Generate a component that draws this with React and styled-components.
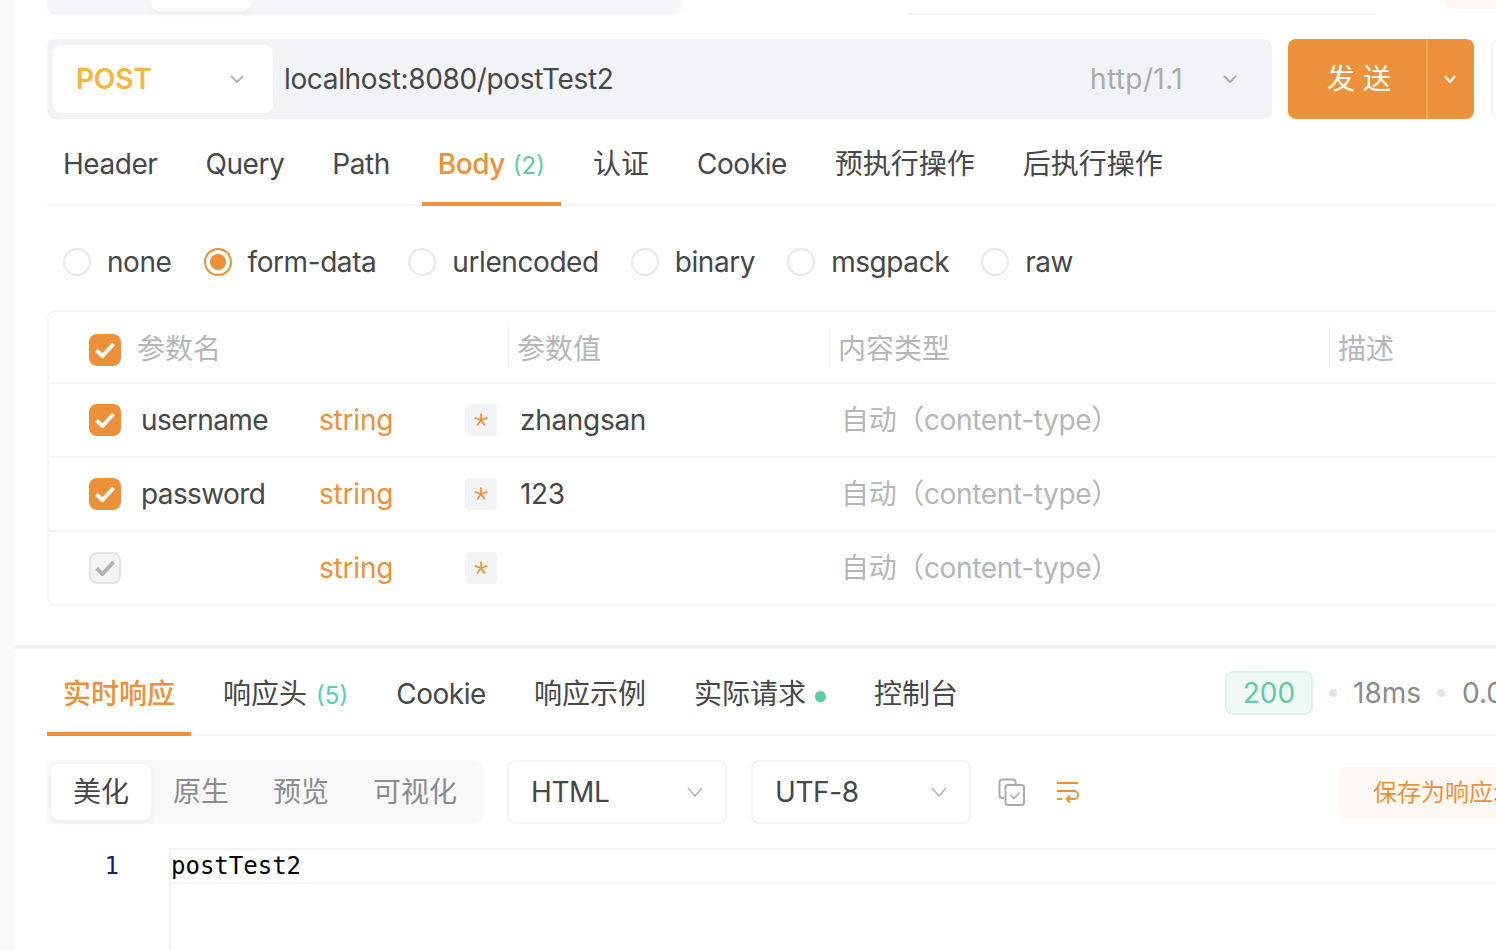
import React from "react";
import styled, { createGlobalStyle } from "styled-components";

const Global = createGlobalStyle`
  html, body { margin: 0; padding: 0; background: #fff; }
  body { width: 1496px; height: 950px; overflow: hidden; font-family: Inter, "Noto Sans CJK SC", sans-serif; color: #464749; font-size: 28px; line-height: 40px; }
  * { box-sizing: border-box; }
`;
const ORANGE = "#ec9139";
const GREEN = "#5fcba4";

const Page = styled.div`
  width: 1496px; height: 950px; display: flex; overflow: hidden; background: #fff;
`;
const Rail = styled.div`width: 15px; flex: none; background: #f7f8fa;`;
const Main = styled.main`width: 1900px; flex: none;`;

const TopStrip = styled.div`height: 39px; padding-left: 32px; display: flex; align-items: flex-start;`;
const TopSegment = styled.div`width: 635px; height: 15px; background: #f5f6f9; border-radius: 0 0 8px 8px; padding-left: 104px;`;
const TopActive = styled.div`width: 100px; height: 11px; background: #fff; border-radius: 0 0 8px 8px; box-shadow: 0 2px 6px rgba(0,0,0,.06);`;
const TopLine = styled.div`width: 467px; height: 2px; background: #f3f3f4; margin: 13px 0 0 227px;`;
const TopPeach = styled.div`width: 80px; height: 9px; background: #fdf8f4; border-radius: 0 0 8px 8px; margin-left: 69px;`;

const Pad = styled.div`padding-left: 32px;`;
const UrlRow = styled.div`display: flex; height: 80px;`;
const UrlBar = styled.div`width: 1225px; background: #f1f3f7; border-radius: 8px; padding: 6px; display: flex; align-items: center;`;
const Method = styled.div`
  width: 220px; height: 68px; background: #fff; border-radius: 8px; display: flex; align-items: center;
  justify-content: space-between; padding: 0 29px 0 23px; color: #f8b63f; font-weight: 600; flex: none;
  letter-spacing: -0.2px;
`;
const UrlText = styled.div`margin-left: 11px; flex: 1; letter-spacing: -0.35px;`;
const Proto = styled.div`color: #a9abaf; margin-right: 40px; letter-spacing: 0.4px;`;
const ProtoArrow = styled.div`display: flex; margin-right: 29px;`;
const Send = styled.div`width: 186px; margin-left: 16px; background: ${ORANGE}; border-radius: 8px; display: flex; color: #fff; flex: none;`;
const SendLabel = styled.div`width: 140px; display: flex; align-items: center; justify-content: center; letter-spacing: 8px; border-right: 2px solid #f3ad5a; padding-left: 12px;`;
const SendArrow = styled.div`flex: 1; display: flex; align-items: center; justify-content: center; padding-right: 2px;`;
const NextBox = styled.div`width: 60px; margin-left: 17px; border: 2px solid #f3f3f4; border-radius: 8px; flex: none;`;

const TabBar = styled.div`
  display: flex; gap: 16px; height: ${p => p.$h}px; border-bottom: 2px solid #f3f3f4; align-items: stretch;
`;
const Tab = styled.div`
  padding: 6px 16px 0; display: flex; align-items: center; margin-bottom: -2px; white-space: nowrap;
  color: ${p => (p.$active ? ORANGE : "#464749")};
  border-bottom: 4px solid ${p => (p.$active ? ORANGE : "transparent")};
  font-weight: ${p => (p.$active ? 500 : 400)};
  letter-spacing: ${p => (p.$latin ? "-0.45px" : "0")};
`;
const Count = styled.span`color: ${GREEN}; font-size: 24px; margin: 4px 0 0 ${p => p.$ml}px; font-weight: 400; letter-spacing: 0;`;
const Dot = styled.span`width: 11px; height: 11px; border-radius: 50%; background: ${GREEN}; margin: 6px 0 0 9px;`;

const RadioRow = styled.div`display: flex; gap: 32px; height: 104px; align-items: center; padding: 8px 0 0 16px; letter-spacing: -0.42px;`;
const RadioItem = styled.div`display: flex; align-items: center; gap: 16px;`;
const RadioMark = styled.span`
  width: 28px; height: 28px; border-radius: 50%; border: 2px solid ${p => (p.$on ? ORANGE : "#e8e8e9")};
  display: flex; align-items: center; justify-content: center;
  &::after { content: ""; width: 16px; height: 16px; border-radius: 50%; background: ${p => (p.$on ? ORANGE : "transparent")}; }
`;

const Table = styled.div`border: 2px solid #f3f3f4; border-radius: 8px 0 0 8px; width: 1800px;`;
const Row = styled.div`
  display: grid; grid-template-columns: 459px 321px 500px 1fr; height: ${p => p.$h}px; align-items: center;
  border-bottom: 2px solid #f3f3f4;
  &:last-child { border-bottom: 0; height: 72px; }
`;
const HeadCell = styled.div`
  color: #b5b6b8; height: 40px; display: flex; align-items: center; padding: 4px 0 0 8px;
  border-left: 1px solid #f0f0f1;
`;
const HeadFirst = styled.div`
  color: #b5b6b8; height: 40px; display: flex; align-items: center; padding: 4px 0 0 40px; gap: 16px;
`;
const NameCell = styled.div`display: flex; align-items: center; padding-left: 40px;`;
const Box = styled.span`
  width: 32px; height: 32px; border-radius: 8px; flex: none; display: flex; align-items: center; justify-content: center;
  background: ${p => (p.$off ? "#f3f3f4" : ORANGE)};
  border: ${p => (p.$off ? "2px solid #e4e4e5" : "0")};
`;
const HeadBox = styled(Box)`margin-top: 2px;`;
const ParamName = styled.span`width: 178px; margin-left: 20px; flex: none; letter-spacing: -0.6px;`;
const ParamType = styled.span`width: 146px; color: ${ORANGE}; flex: none; letter-spacing: -0.2px;`;
const Required = styled.span`
  width: 32px; height: 32px; background: #f2f3f5; border-radius: 4px; color: ${ORANGE}; flex: none;
  display: flex; align-items: center; justify-content: center;
`;
const ValueCell = styled.div`padding-left: 12px; letter-spacing: -0.3px;`;
const TypeCell = styled.div`color: #b5b6b8; padding-left: 12px; white-space: nowrap; letter-spacing: -0.35px;`;

const Divider = styled.div`height: 4px; background: #f1f1ed; margin-top: 39px;`;
const RespBar = styled.div`display: flex; height: 87px; position: relative;`;
const RespTabs = styled(TabBar)`width: 100%;`;
const Stats = styled.div`position: absolute; left: 1178px; top: 22px; display: flex; align-items: center; height: 44px; color: #8a8b8d; white-space: nowrap;`;
const Status = styled.span`
  width: 88px; height: 44px; border-radius: 8px; background: #eef9f5; border: 2px solid #d9f3ea; color: ${GREEN};
  display: flex; align-items: center; justify-content: center; margin-right: 16px;
`;
const Sep = styled.span`width: 8px; height: 8px; border-radius: 50%; background: #e4e4e6; margin: 0 ${p => p.$r}px 0 ${p => p.$l}px;`;

const Tools = styled.div`display: flex; height: 64px; margin-top: 24px; align-items: center;`;
const Segment = styled.div`display: flex; background: #f7f8fa; border-radius: 8px; padding: 4px; height: 64px; width: 436px; flex: none;`;
const SegItem = styled.div`
  padding: 0 22px; display: flex; align-items: center; border-radius: 8px;
  color: ${p => (p.$active ? "#464749" : "#8b8c8e")};
  background: ${p => (p.$active ? "#fff" : "transparent")};
  box-shadow: ${p => (p.$active ? "0 2px 6px rgba(0,0,0,.06)" : "none")};
`;
const Select = styled.div`
  width: 220px; height: 64px; border: 2px solid #f3f3f4; border-radius: 8px; display: flex; flex: none;
  align-items: center; justify-content: space-between; padding: 0 22px; margin-left: ${p => p.$ml}px;
  letter-spacing: -0.4px;
`;
const IconSlot = styled.div`display: flex; flex: none; margin-left: ${p => p.$ml}px;`;
const SaveBtn = styled.div`
  height: 51px; margin-left: 259px; background: #fdf8f4; border-radius: 8px; color: ${ORANGE}; font-size: 24px;
  padding: 2px 34px 0 35px; display: flex; align-items: center; white-space: nowrap; flex: none;
`;

const Editor = styled.div`display: flex; margin-top: 24px; height: 102px;`;
const Gutter = styled.div`
  width: 122px; flex: none; text-align: right; padding-right: 50px; color: #10206e;
  font-family: "DejaVu Sans Mono", monospace; font-size: 24px; line-height: 36px;
`;
const CodeArea = styled.div`flex: 1; border-left: 2px solid #f3f3f4;`;
const CodeLine = styled.div`
  height: 36px; border-top: 2px solid #f3f3f4; border-bottom: 2px solid #f3f3f4; color: #000;
  font-family: "DejaVu Sans Mono", monospace; font-size: 24px; line-height: 32px;
`;

const Chevron = ({ w = 14, h = 8, color = "#b3b4b6", sw = 2 }) => (
  <svg width={w} height={h} viewBox={`0 0 ${w} ${h}`} fill="none">
    <path d={`M1 1 L${w / 2} ${h - 1} L${w - 1} 1`} stroke={color} strokeWidth={sw} />
  </svg>
);
const Tick = ({ color = "#fff" }) => (
  <svg width="20" height="16" viewBox="0 0 20 16" fill="none">
    <path d="M1.5 8.5 L7.5 14 L18.5 2" stroke={color} strokeWidth="4" />
  </svg>
);
const Star = () => (
  <svg width="14" height="14" viewBox="0 0 14 14" fill="none" stroke={ORANGE} strokeWidth="1.7">
    <path d="M7 7V0.5M7 7L13.4 4.9M7 7L0.6 4.9M7 7L10.9 12.4M7 7L3.1 12.4" />
  </svg>
);
const CopyIcon = () => (
  <svg width="27" height="28" viewBox="0 0 27 28" fill="none" stroke="#a9abaf" strokeWidth="2">
    <path d="M6 20 H4 a2.5 2.5 0 0 1 -2.5 -2.5 V4 A2.5 2.5 0 0 1 4 1.5 H15 A2.5 2.5 0 0 1 17.5 4 V6" />
    <rect x="7.5" y="7" width="18.5" height="20" rx="2.5" />
    <path d="M12.5 17 L16 20.5 L21.5 14.5" strokeWidth="1.6" />
  </svg>
);
const WrapIcon = () => (
  <svg width="23" height="22" viewBox="0 0 23 22" fill="none" stroke={ORANGE} strokeWidth="2">
    <path d="M1 2 H22" />
    <path d="M1 10 H18 a3.6 3.6 0 0 1 0 8 H11" />
    <path d="M14 14.5 L10.5 18 L14 21.5" />
    <path d="M1 18 H6" />
  </svg>
);

const reqTabs = [
  { t: "Header", latin: true }, { t: "Query", latin: true }, { t: "Path", latin: true },
  { t: "Body", latin: true, count: "(2)", active: true }, { t: "认证" }, { t: "Cookie", latin: true },
  { t: "预执行操作" }, { t: "后执行操作" },
];
const radios = ["none", "form-data", "urlencoded", "binary", "msgpack", "raw"];
const params = [
  { name: "username", value: "zhangsan" },
  { name: "password", value: "123" },
  { name: "", value: "", off: true },
];

export default function App() {
  return (
    <Page>
      <Global />
      <Rail />
      <Main>
        <TopStrip>
          <TopSegment><TopActive /></TopSegment>
          <TopLine />
          <TopPeach />
        </TopStrip>
        <Pad>
          <UrlRow>
            <UrlBar>
              <Method>POST<Chevron /></Method>
              <UrlText>localhost:8080/postTest2</UrlText>
              <Proto>http/1.1</Proto>
              <ProtoArrow><Chevron color="#a9abaf" /></ProtoArrow>
            </UrlBar>
            <Send>
              <SendLabel>发送</SendLabel>
              <SendArrow><Chevron w={12} h={8} color="#fff" /></SendArrow>
            </Send>
            <NextBox />
          </UrlRow>
          <TabBar $h={87}>
            {reqTabs.map(({ t, latin, count, active }) => (
              <Tab key={t} $active={active} $latin={latin}>
                {t}{count && <Count $ml={8}>{count}</Count>}
              </Tab>
            ))}
          </TabBar>
          <RadioRow>
            {radios.map(r => (
              <RadioItem key={r}><RadioMark $on={r === "form-data"} />{r}</RadioItem>
            ))}
          </RadioRow>
          <Table>
            <Row $h={72}>
              <HeadFirst><HeadBox><Tick /></HeadBox>参数名</HeadFirst>
              <HeadCell>参数值</HeadCell>
              <HeadCell>内容类型</HeadCell>
              <HeadCell>描述</HeadCell>
            </Row>
            {params.map((p, i) => (
              <Row key={i} $h={74}>
                <NameCell>
                  <Box $off={p.off}><Tick color={p.off ? "#b2b3b5" : "#fff"} /></Box>
                  <ParamName>{p.name}</ParamName>
                  <ParamType>string</ParamType>
                  <Required><Star /></Required>
                </NameCell>
                <ValueCell>{p.value}</ValueCell>
                <TypeCell>自动（content-type）</TypeCell>
                <div />
              </Row>
            ))}
          </Table>
        </Pad>
        <Divider />
        <Pad>
          <RespBar>
            <RespTabs $h={87}>
              <Tab $active>实时响应</Tab>
              <Tab>响应头<Count $ml={9}>(5)</Count></Tab>
              <Tab $latin>Cookie</Tab>
              <Tab>响应示例</Tab>
              <Tab>实际请求<Dot /></Tab>
              <Tab>控制台</Tab>
            </RespTabs>
            <Stats>
              <Status>200</Status>
              <Sep $l={0} $r={16} />
              <span>18ms</span>
              <Sep $l={16} $r={17} />
              <span>0.09KB</span>
            </Stats>
          </RespBar>
          <Tools>
            <Segment>
              <SegItem $active>美化</SegItem>
              <SegItem>原生</SegItem>
              <SegItem>预览</SegItem>
              <SegItem>可视化</SegItem>
            </Segment>
            <Select $ml={24}>HTML<Chevron w={16} h={10} sw={1.5} /></Select>
            <Select $ml={24}>UTF-8<Chevron w={16} h={10} sw={1.5} /></Select>
            <IconSlot $ml={27}><CopyIcon /></IconSlot>
            <IconSlot $ml={31}><WrapIcon /></IconSlot>
            <SaveBtn>保存为响应示例</SaveBtn>
          </Tools>
          <Editor>
            <Gutter>1</Gutter>
            <CodeArea><CodeLine>postTest2</CodeLine></CodeArea>
          </Editor>
        </Pad>
      </Main>
    </Page>
  );
}
